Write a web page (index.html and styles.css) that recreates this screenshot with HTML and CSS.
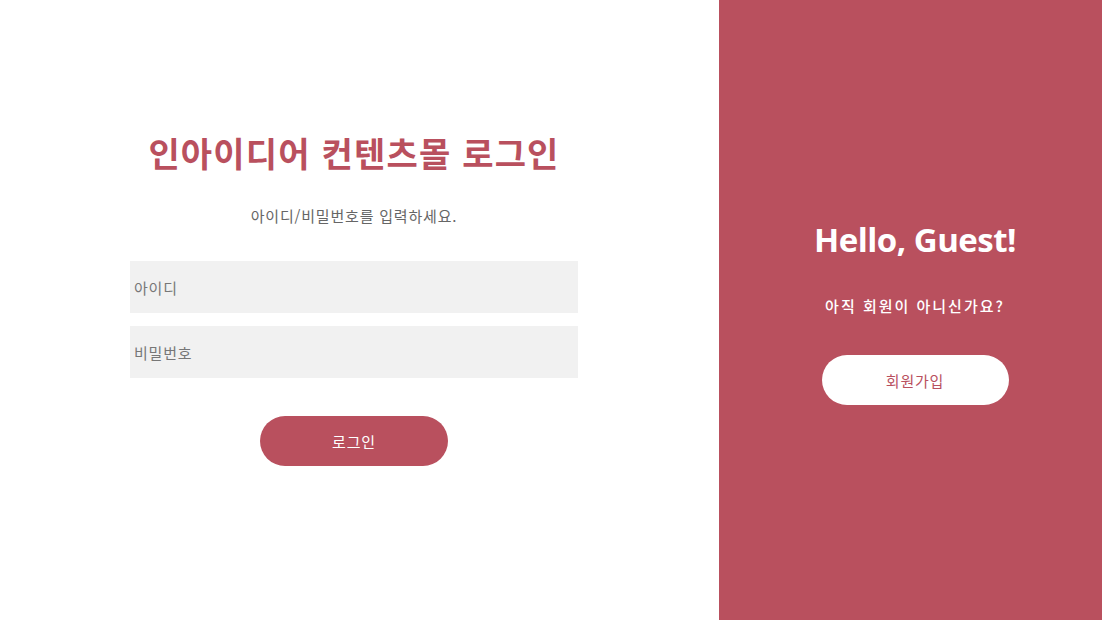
FILE: index.html
```html
<!DOCTYPE html>
<html lang="ko">
<head>
  <meta charset="UTF-8">
  <title>인아이디어 컨텐츠몰 로그인</title>
  <link rel="stylesheet" href="styles.css">
</head>
<body>
<div class="wrap">
  <!-- 로그인 영역 -->
  <div class="login-panel">
    <form class="login-form">
      <h1 class="login-title">인아이디어 컨텐츠몰 로그인</h1>
      <p class="login-desc">아이디/비밀번호를 입력하세요.</p>
      <input class="login-input" type="text" placeholder="아이디">
      <input class="login-input" type="password" placeholder="비밀번호">
      <button class="btn btn-login" type="button">로그인</button>
    </form>
  </div>
  <!-- 회원가입 안내 -->
  <div class="guest-panel">
    <div class="guest-box">
      <h2 class="guest-title">Hello, Guest!</h2>
      <p class="guest-desc">아직 회원이 아니신가요?</p>
      <button class="btn btn-join" type="button">회원가입</button>
    </div>
  </div>
</div>
</body>
</html>
```

FILE: styles.css
```css
* {
  box-sizing: border-box;
}
body {
  margin: 0;
  font-family: "Noto Sans CJK KR", "Noto Sans", sans-serif;
  background: #fff;
}
.wrap {
  display: flex;
  width: 100%;
  height: 100vh;
}
/* 왼쪽 로그인 */
.login-panel {
  width: 719px;
  display: flex;
  justify-content: center;
  padding-right: 11px;
  padding-top: 128px;
}
.login-form {
  width: 448px;
  display: flex;
  flex-direction: column;
  align-items: center;
}
.login-title {
  margin: 0;
  font-size: 34px;
  font-weight: 700;
  color: #b9505e;
  line-height: 50px;
  letter-spacing: 1.2px;
}
.login-desc {
  margin: 27px 0 34px;
  font-size: 15px;
  color: #666;
  line-height: 22px;
  letter-spacing: 0.8px;
}
.login-input {
  width: 100%;
  height: 52px;
  border: none;
  background: #f1f1f1;
  padding: 0 4px;
  margin-bottom: 13px;
  font-family: inherit;
  font-size: 15px;
  color: #333;
  outline: none;
  letter-spacing: 0.8px;
}
.login-input::placeholder {
  color: #777;
}
.btn {
  width: 188px;
  height: 50px;
  border: none;
  border-radius: 25px;
  font-family: inherit;
  font-size: 15px;
  cursor: pointer;
  letter-spacing: 0.8px;
}
.btn-login {
  margin-top: 25px;
  background: #b9505e;
  color: #fff;
}
/* 오른쪽 안내 */
.guest-panel {
  flex: 1;
  background: #b9505e;
  display: flex;
  justify-content: center;
  padding-left: 9px;
  padding-top: 216px;
}
.guest-box {
  display: flex;
  flex-direction: column;
  align-items: center;
}
.guest-title {
  margin: 0;
  font-family: "Open Sans", "Noto Sans", sans-serif;
  font-size: 33px;
  font-weight: 700;
  color: #fff;
  line-height: 48px;
  letter-spacing: -0.5px;
}
.guest-desc {
  margin: 31px 0 0;
  font-size: 15px;
  font-weight: 500;
  color: #fff;
  line-height: 22px;
  letter-spacing: 2px;
}
.btn-join {
  margin-top: 38px;
  width: 187px;
  background: #fff;
  color: #b9505e;
}
```
